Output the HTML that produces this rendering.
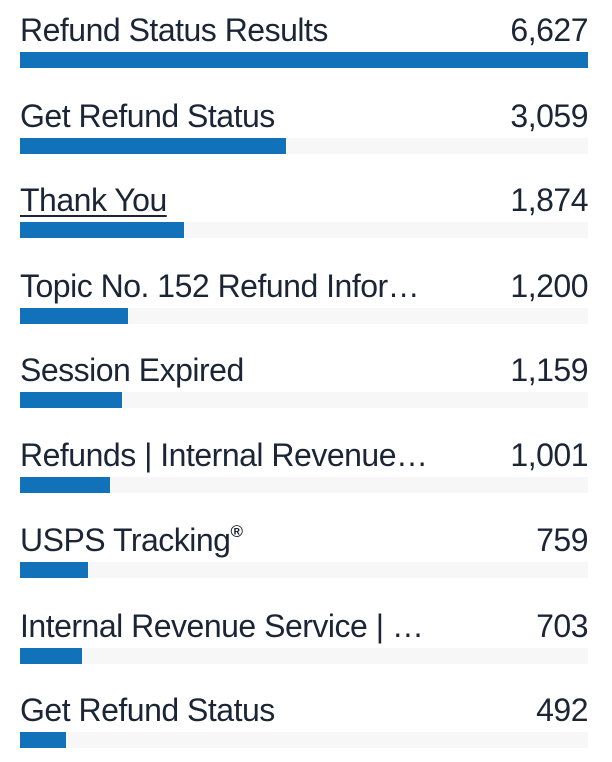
<!DOCTYPE html>
<html><head><meta charset="utf-8"><style>
html,body{margin:0;padding:0;background:#fff;width:612px;height:762px;overflow:hidden}
.row{position:absolute;left:20px;width:568px;height:70px}
.lab{position:absolute;left:0;bottom:22px;font-family:"Liberation Sans",sans-serif;font-size:32px;color:#1b2535;letter-spacing:-0.5px;white-space:nowrap;line-height:1}
.num{position:absolute;right:0;bottom:22px;font-family:"Liberation Sans",sans-serif;font-size:32px;color:#1b2535;letter-spacing:-0.5px;line-height:1}
.track{position:absolute;left:0;bottom:0;width:568px;height:16px;background:#f7f7f7}
.bar{position:absolute;left:0;top:0;height:16px;background:#1172ba}
u{text-decoration-thickness:2px;text-underline-offset:4px}
sup{font-size:17px;font-weight:bold;vertical-align:14px}
</style></head><body>
<div class="row" style="top:-2px"><div class="lab">Refund Status Results</div><div class="num">6,627</div><div class="track"><div class="bar" style="width:568px"></div></div></div>
<div class="row" style="top:84px"><div class="lab">Get Refund Status</div><div class="num">3,059</div><div class="track"><div class="bar" style="width:266px"></div></div></div>
<div class="row" style="top:168px"><div class="lab"><u>Thank You</u></div><div class="num">1,874</div><div class="track"><div class="bar" style="width:164px"></div></div></div>
<div class="row" style="top:254px"><div class="lab">Topic No. 152 Refund Infor…</div><div class="num">1,200</div><div class="track"><div class="bar" style="width:108px"></div></div></div>
<div class="row" style="top:338px"><div class="lab">Session Expired</div><div class="num">1,159</div><div class="track"><div class="bar" style="width:102px"></div></div></div>
<div class="row" style="top:423px"><div class="lab">Refunds | Internal Revenue…</div><div class="num">1,001</div><div class="track"><div class="bar" style="width:90px"></div></div></div>
<div class="row" style="top:508px"><div class="lab">USPS Tracking<sup>®</sup></div><div class="num">759</div><div class="track"><div class="bar" style="width:68px"></div></div></div>
<div class="row" style="top:594px"><div class="lab">Internal Revenue Service | …</div><div class="num">703</div><div class="track"><div class="bar" style="width:62px"></div></div></div>
<div class="row" style="top:678px"><div class="lab">Get Refund Status</div><div class="num">492</div><div class="track"><div class="bar" style="width:46px"></div></div></div>
</body></html>
